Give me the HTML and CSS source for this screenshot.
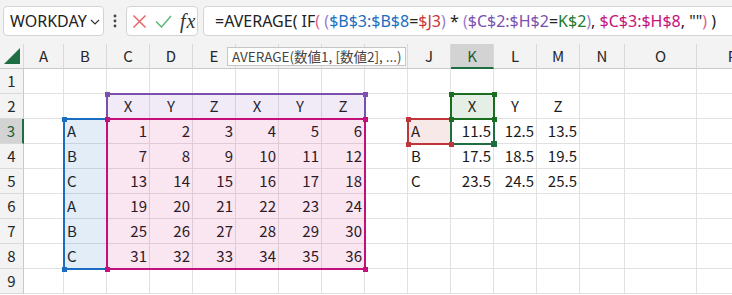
FILE: index.html
```html
<!DOCTYPE html>
<html lang="ja">
<head>
<meta charset="utf-8">
<link rel="stylesheet" href="styles.css">
</head>
<body>
<div class="bar">
  <div class="namebox"><span>WORKDAY</span><svg class="chev" width="10" height="6" viewBox="0 0 10 6"><path d="M1 1l4 4 4-4" fill="none" stroke="#333" stroke-width="1.2"/></svg></div>
  <div class="dots"><svg width="4" height="14" viewBox="0 0 4 14"><circle cx="2" cy="2" r="1.4" fill="#444"/><circle cx="2" cy="7" r="1.4" fill="#444"/><circle cx="2" cy="12" r="1.4" fill="#444"/></svg></div>
  <div class="fxbox">
    <svg width="15" height="15" viewBox="0 0 15 15"><path d="M1.5 1.5l12 12M13.5 1.5l-12 12" stroke="#e5676a" stroke-width="1.5" fill="none"/></svg>
    <svg width="17" height="13" viewBox="0 0 17 13"><path d="M1 6.5l5.5 5.5L16 1" stroke="#5cb87a" stroke-width="1.5" fill="none"/></svg>
    <span class="fx">fx</span>
  </div>
  <div class="formula"><span>=AVERAGE( IF</span><span class="p1">(</span> <span class="p2">(</span><span class="rb">$B$3:$B$8</span>=<span class="rr">$J3</span><span class="p2">)</span> * <span class="p2">(</span><span class="rp">$C$2:$H$2</span>=<span class="rg">K$2</span><span class="p2">)</span>, <span class="rm">$C$3:$H$8</span>, &quot;&quot;<span class="p1">)</span> )</div>
</div>

<div class="sheet">
  <div class="row hdr">
    <div class="corner"><svg width="17" height="16" viewBox="0 0 17 16"><path d="M0 16L16 16L16 0Z" fill="#1f6e43"/></svg></div>
    <div>A</div><div>B</div><div>C</div><div>D</div><div>E</div><div>F</div><div>G</div><div>H</div><div>I</div><div>J</div><div class="sel">K</div><div>L</div><div>M</div><div>N</div><div>O</div><div>P</div>
  </div>
  <div class="row">
    <div class="rh">1</div><div></div><div></div><div></div><div></div><div></div><div></div><div></div><div></div><div></div><div></div><div></div><div></div><div></div><div></div><div></div><div></div>
  </div>
  <div class="row">
    <div class="rh">2</div><div></div><div></div><div class="ct">X</div><div class="ct">Y</div><div class="ct">Z</div><div class="ct">X</div><div class="ct">Y</div><div class="ct">Z</div><div></div><div></div><div class="ct">X</div><div class="ct">Y</div><div class="ct">Z</div><div></div><div></div><div></div>
  </div>
  <div class="row">
    <div class="rh sel">3</div><div></div><div>A</div><div class="n">1</div><div class="n">2</div><div class="n">3</div><div class="n">4</div><div class="n">5</div><div class="n">6</div><div></div><div>A</div><div class="n">11.5</div><div class="n">12.5</div><div class="n">13.5</div><div></div><div></div><div></div>
  </div>
  <div class="row">
    <div class="rh">4</div><div></div><div>B</div><div class="n">7</div><div class="n">8</div><div class="n">9</div><div class="n">10</div><div class="n">11</div><div class="n">12</div><div></div><div>B</div><div class="n">17.5</div><div class="n">18.5</div><div class="n">19.5</div><div></div><div></div><div></div>
  </div>
  <div class="row">
    <div class="rh">5</div><div></div><div>C</div><div class="n">13</div><div class="n">14</div><div class="n">15</div><div class="n">16</div><div class="n">17</div><div class="n">18</div><div></div><div>C</div><div class="n">23.5</div><div class="n">24.5</div><div class="n">25.5</div><div></div><div></div><div></div>
  </div>
  <div class="row">
    <div class="rh">6</div><div></div><div>A</div><div class="n">19</div><div class="n">20</div><div class="n">21</div><div class="n">22</div><div class="n">23</div><div class="n">24</div><div></div><div></div><div></div><div></div><div></div><div></div><div></div><div></div>
  </div>
  <div class="row">
    <div class="rh">7</div><div></div><div>B</div><div class="n">25</div><div class="n">26</div><div class="n">27</div><div class="n">28</div><div class="n">29</div><div class="n">30</div><div></div><div></div><div></div><div></div><div></div><div></div><div></div><div></div>
  </div>
  <div class="row">
    <div class="rh">8</div><div></div><div>C</div><div class="n">31</div><div class="n">32</div><div class="n">33</div><div class="n">34</div><div class="n">35</div><div class="n">36</div><div></div><div></div><div></div><div></div><div></div><div></div><div></div><div></div>
  </div>
  <div class="row">
    <div class="rh">9</div><div></div><div></div><div></div><div></div><div></div><div></div><div></div><div></div><div></div><div></div><div></div><div></div><div></div><div></div><div></div><div></div>
  </div>

  <div class="rng blue"></div>
  <div class="rng purple"></div>
  <div class="rng magenta"></div>
  <div class="rng red"></div>
  <div class="rng active"></div>
  <div class="rng green"></div>

  <div class="h hb h-b1"></div><div class="h hb h-b2"></div>
  <div class="h hp h-p1"></div><div class="h hp h-p2"></div>
  <div class="h hm h-m1"></div><div class="h hm h-m2"></div><div class="h hm h-m3"></div><div class="h hm h-m4"></div>
  <div class="h hr h-r1"></div><div class="h hr h-r2"></div><div class="h hr h-r3"></div>
  <div class="h hg h-g1"></div><div class="h hg h-g2"></div><div class="h hg h-g3"></div><div class="h hg h-g4"></div>
  <div class="h fill-handle"></div>

  <div class="tip">AVERAGE(数値1, [数値2], ...)</div>
</div>
</body>
</html>
```

FILE: styles.css
```css
html, body {
  margin: 0;
  padding: 0;
}
body {
  width: 732px;
  height: 295px;
  overflow: hidden;
  background: #ffffff;
  font-family: "Noto Sans", "Noto Sans CJK JP", sans-serif;
  color: #1a1a1a;
}

/* ---------- formula bar ---------- */
.bar {
  display: flex;
  align-items: flex-start;
  height: 44px;
  box-sizing: border-box;
  padding: 6px 0 0 3px;
  background: #f3f3f3;
  overflow: hidden;
}
.namebox {
  width: 101px;
  height: 30px;
  box-sizing: border-box;
  border: 1px solid #d4d4d4;
  border-radius: 4px;
  background: #fff;
  display: flex;
  align-items: center;
  padding-left: 6px;
  gap: 3px;
  font-size: 16px;
  color: #222;
  white-space: nowrap;
}
.chev { margin-top: 2px; }
.dots {
  width: 22px;
  height: 30px;
  display: flex;
  align-items: center;
  justify-content: center;
}
.fxbox {
  width: 72px;
  height: 30px;
  box-sizing: border-box;
  border: 1px solid #d4d4d4;
  border-radius: 4px;
  background: #fff;
  display: flex;
  align-items: center;
  padding-left: 5px;
  gap: 8px;
}
.fx {
  font-family: "Liberation Serif", "DejaVu Serif", serif;
  font-style: italic;
  font-size: 20px;
  color: #333;
  letter-spacing: 1px;
}
.formula {
  flex: 1;
  height: 30px;
  margin-left: 5px;
  margin-right: -12px;
  box-sizing: border-box;
  border: 1px solid #d4d4d4;
  border-radius: 4px;
  background: #fff;
  padding-left: 11px;
  font-size: 16px;
  line-height: 28px;
  color: #222;
  white-space: pre;
  overflow: hidden;
}
.p1 { color: #e0608c; }
.p2 { color: #9a7fd0; }
.rb { color: #1a6dc0; }
.rr { color: #c8343c; }
.rp { color: #7b4fae; }
.rg { color: #1a7a2a; }
.rm { color: #c4107a; }

/* ---------- sheet ---------- */
.sheet {
  position: relative;
  height: 251px;
  overflow: hidden;
}
.row {
  display: grid;
  grid-template-columns: 24px 40px repeat(12, 43px) 45px 72px 72px;
  height: 25px;
}
.row > div {
  box-sizing: border-box;
  border-right: 1px solid #e1e1e1;
  border-bottom: 1px solid #e1e1e1;
  line-height: 24px;
  font-family: "Noto Sans CJK JP", "Noto Sans", sans-serif;
  font-size: 15px;
  padding: 0 3px;
  white-space: nowrap;
  overflow: hidden;
}
.row > .n { text-align: right; padding-right: 2px; }
.row > .ct { text-align: center; }
.hdr > div {
  background: #f3f3f3;
  border-right-color: #d9d9d9;
  border-bottom-color: #c9c9c9;
  text-align: center;
  color: #262626;
}
.hdr > .corner {
  display: flex;
  align-items: flex-end;
  justify-content: flex-start;
  padding: 0 0 4px 4px;
}
.hdr > .sel {
  background: #d3d3d3;
  color: #1b5e35;
  border-bottom: 2px solid #1e6e42;
}
.row > .rh {
  background: #f3f3f3;
  border-right-color: #c9c9c9;
  border-bottom-color: #d9d9d9;
  text-align: center;
  padding: 0;
  color: #262626;
}
.row > .rh.sel {
  background: #d3d3d3;
  color: #1b5e35;
  border-right: 2px solid #1e6e42;
}

/* ---------- range highlights ---------- */
.rng {
  position: absolute;
  box-sizing: border-box;
  border: 2px solid;
}
.blue {
  left: 63px; top: 74px; width: 43px; height: 152px;
  border-color: #1a6dc0;
  border-right: none;
  background: rgba(26, 109, 192, 0.12);
}
.purple {
  left: 106px; top: 49px; width: 260px; height: 25px;
  border-color: #7b4fae;
  border-bottom: none;
  background: rgba(123, 79, 174, 0.115);
}
.magenta {
  left: 106px; top: 74px; width: 260px; height: 152px;
  border-color: #c4107a;
  background: rgba(196, 16, 122, 0.105);
}
.red {
  left: 407px; top: 74px; width: 45px; height: 27px;
  border-color: #c0343b;
  background: rgba(192, 52, 59, 0.11);
}
.active {
  left: 450px; top: 74px; width: 45px; height: 27px;
  border-color: #1e6e42;
}
.green {
  left: 450px; top: 49px; width: 45px; height: 27px;
  border-color: #1a6e1f;
  background: rgba(26, 110, 31, 0.11);
}

.h {
  position: absolute;
  width: 5px;
  height: 5px;
}
.hb { background: #1a6dc0; }
.hp { background: #7b4fae; }
.hm { background: #c4107a; }
.hr { background: #c0343b; }
.hg { background: #1a6e1f; }
.h-b1 { left: 62px; top: 73px; }
.h-b2 { left: 62px; top: 223px; }
.h-p1 { left: 105px; top: 48px; }
.h-p2 { left: 363px; top: 48px; }
.h-m1 { left: 105px; top: 73px; }
.h-m2 { left: 363px; top: 73px; }
.h-m3 { left: 105px; top: 223px; }
.h-m4 { left: 363px; top: 223px; }
.h-r1 { left: 406px; top: 73px; }
.h-r2 { left: 406px; top: 98px; }
.h-r3 { left: 449px; top: 98px; }
.h-g1 { left: 449px; top: 48px; }
.h-g2 { left: 492px; top: 48px; }
.h-g3 { left: 449px; top: 73px; }
.h-g4 { left: 492px; top: 73px; }
.fill-handle {
  left: 491px; top: 97px;
  width: 6px; height: 6px;
  background: #1e6e42;
}

/* ---------- tooltip ---------- */
.tip {
  position: absolute;
  left: 227px;
  top: 3px;
  width: 179px;
  height: 19px;
  box-sizing: border-box;
  border: 1px solid #c6c6c6;
  background: #fff;
  padding-left: 4px;
  font-family: "Noto Sans CJK JP", sans-serif;
  font-size: 13.5px;
  line-height: 17px;
  color: #444;
  white-space: nowrap;
  overflow: hidden;
}
```
